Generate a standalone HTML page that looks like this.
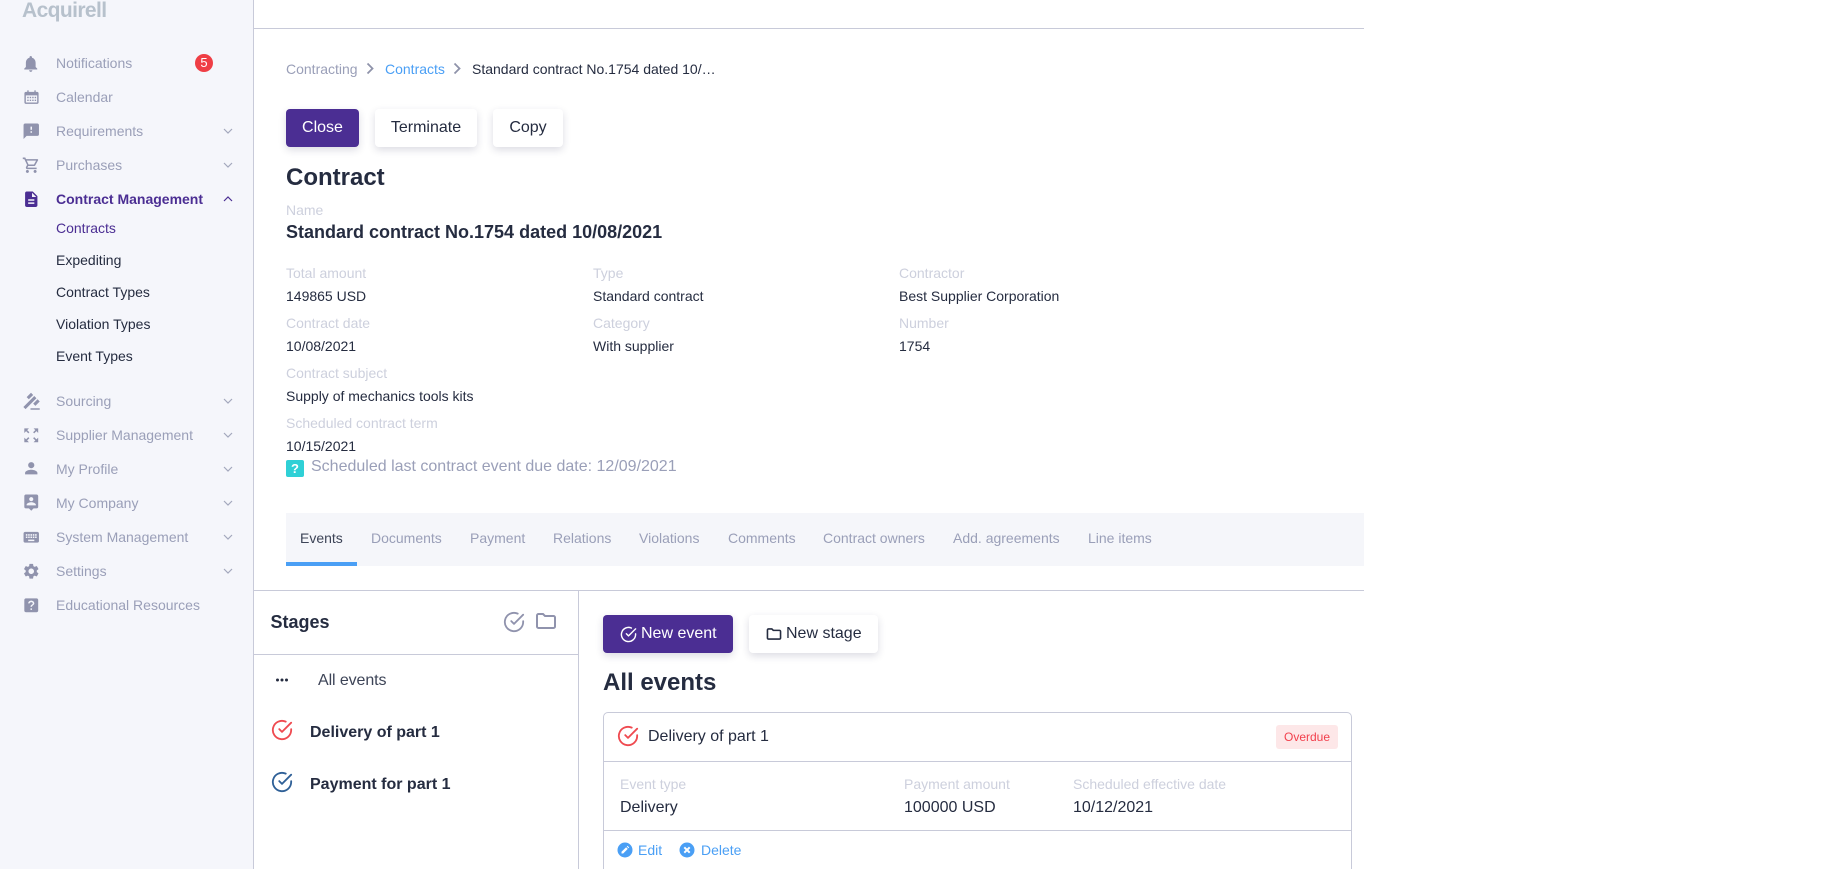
<!DOCTYPE html>
<html lang="en"><head><meta charset="utf-8"><title>Contract</title>
<style>
html,body{margin:0;padding:0;width:1821px;height:869px;overflow:hidden;background:#fff}
body{position:relative;font-family:"Liberation Sans",Arial,sans-serif;font-size:14px;color:#252c40}
.t{position:absolute;line-height:20px;white-space:nowrap}
.abs{position:absolute}
.side{position:absolute;left:0;top:0;width:253px;height:869px;background:#f5f6fb;border-right:1px solid #c8cad9}
.m{color:#9a9fb8}
.l{color:#cdd0dd}
.ic{position:absolute;width:18.5px;height:18.5px;left:21.75px;fill:#9093ad}
.ch{position:absolute;left:222px;width:12px;height:8px;fill:none;stroke:#a3a7bd;stroke-width:1.2}
.btn{position:absolute;height:38px;line-height:37px;border-radius:4px;background:#fff;box-shadow:0 3px 8px rgba(40,40,80,.16);text-align:center;font-size:16px;color:#252c40}
.btn.p{background:#4b2e93;color:#fff}
.hl{position:absolute;height:1px;background:#c8cad9}
.vl{position:absolute;width:1px;background:#c8cad9}
.tab{color:#9a9fb8;top:528px}
</style></head><body>
<div class="side"></div>
<div class="t" style="left:22px;top:-2px;font-size:21px;line-height:26px;font-weight:bold;color:#b7c1cc;letter-spacing:-.6px">Acquirell</div>

<svg class="ic" style="top:54px;width:19.5px;height:19.5px;left:21.25px" viewBox="0 0 24 24"><path d="M12 22c1.1 0 2-.9 2-2h-4c0 1.1.89 2 2 2zm6-6v-5c0-3.07-1.64-5.64-4.500-6.320V4c0-.83-.67-1.500-1.500-1.500s-1.500.67-1.500 1.500v.68C7.630 5.360 6 7.920 6 11v5l-2 2v1h16v-1l-2-2z"/></svg>
<svg class="ic" style="top:89px;width:17px;height:17px;left:22.5px" viewBox="0 0 24 24"><path fill-rule="evenodd" d="M6 2h2v2h8V2h2v2h2c1.100 0 2 .9 2 2v13c0 1.100-.9 2-2 2H4c-1.100 0-2-.9-2-2V6c0-1.100.9-2 2-2h2V2zM4 9v10h16V9H4zm2 2h2v2H6v-2zm3.500 0h2v2h-2v-2zm3.500 0h2v2h-2v-2zm3.500 0h2v2h-2v-2zM6 15h2v2H6v-2zm3.500 0h2v2h-2v-2zm3.500 0h2v2h-2v-2zm3.500 0h2v2h-2v-2z"/></svg>
<svg class="ic" style="top:122px" viewBox="0 0 24 24"><path d="M20 2H4c-1.100 0-1.990.9-1.990 2L2 22l4-4h14c1.100 0 2-.9 2-2V4c0-1.100-.9-2-2-2zm-7 12h-2v-2h2v2zm0-4h-2V6h2v4z"/></svg>
<svg class="ic" style="top:156px" viewBox="0 0 24 24"><path d="M15.550 13c.75 0 1.410-.41 1.750-1.030l3.580-6.490c.37-.66-.11-1.480-.87-1.480H5.210l-.94-2H1v2h2l3.600 7.590-1.350 2.440C4.520 15.370 5.480 17 7 17h12v-2H7l1.100-2h7.450zM6.160 6h12.150l-2.760 5H8.530L6.160 6zM7 18c-1.100 0-1.990.9-1.990 2S5.900 22 7 22s2-.9 2-2-.9-2-2-2zm10 0c-1.100 0-1.990.9-1.990 2s.89 2 1.990 2 2-.9 2-2-.9-2-2-2z"/></svg>
<svg class="ic" style="top:190px;fill:#4b2e93" viewBox="0 0 24 24"><path d="M14 2H6c-1.100 0-1.990.9-1.990 2L4 20c0 1.100.89 2 1.990 2H18c1.100 0 2-.9 2-2V8l-6-6zm2 16H8v-2h8v2zm0-4H8v-2h8v2zm-3-5V3.500L18.500 9H13z"/></svg>
<svg class="ic" style="top:392px;transform:scaleX(-1)" viewBox="0 0 24 24"><path d="M1 21h12v2H1zM5.245 8.070l2.830-2.827 14.140 14.142-2.828 2.828zM12.317 1l5.657 5.656-2.830 2.830-5.654-5.660zM3.825 9.485l5.657 5.657-2.828 2.828-5.657-5.657z"/></svg>
<svg class="ic" style="top:426px" viewBox="0 0 24 24"><path d="M15 3l2.300 2.300-2.890 2.870 1.420 1.420L18.700 6.700 21 9V3zM3 9l2.300-2.300 2.870 2.890 1.420-1.420L6.700 5.300 9 3H3zm6 12l-2.300-2.300 2.890-2.870-1.420-1.420L5.300 17.300 3 15v6zm12-6l-2.300 2.300-2.870-2.890-1.420 1.420 2.890 2.870L15 21h6z"/></svg>
<svg class="ic" style="top:459px" viewBox="0 0 24 24"><path d="M12 12c2.210 0 4-1.790 4-4s-1.790-4-4-4-4 1.790-4 4 1.790 4 4 4zm0 2c-2.670 0-8 1.340-8 4v2h16v-2c0-2.660-5.330-4-8-4z"/></svg>
<svg class="ic" style="top:493px" viewBox="0 0 24 24"><path d="M19 2H5c-1.110 0-2 .9-2 2v14c0 1.100.89 2 2 2h4l3 3 3-3h4c1.100 0 2-.9 2-2V4c0-1.100-.9-2-2-2zm-7 3.300c1.490 0 2.700 1.210 2.700 2.700 0 1.490-1.210 2.700-2.700 2.700-1.490 0-2.700-1.210-2.700-2.700 0-1.490 1.210-2.700 2.700-2.700zM18 16H6v-.9c0-2 4-3.100 6-3.100s6 1.100 6 3.100v.9z"/></svg>
<svg class="ic" style="top:528px" viewBox="0 0 24 24"><path d="M20 5H4c-1.100 0-1.990.9-1.990 2L2 17c0 1.100.9 2 2 2h16c1.100 0 2-.9 2-2V7c0-1.100-.9-2-2-2zm-9 3h2v2h-2V8zm0 3h2v2h-2v-2zM8 8h2v2H8V8zm0 3h2v2H8v-2zm-1 2H5v-2h2v2zm0-3H5V8h2v2zm9 7H8v-2h8v2zm0-4h-2v-2h2v2zm0-3h-2V8h2v2zm3 3h-2v-2h2v2zm0-3h-2V8h2v2z"/></svg>
<svg class="ic" style="top:562px" viewBox="0 0 24 24"><path d="M19.140 12.940c.04-.3.06-.61.06-.94 0-.32-.02-.64-.07-.94l2.030-1.580c.18-.14.23-.41.12-.61l-1.920-3.320c-.12-.22-.37-.29-.59-.22l-2.390.96c-.5-.38-1.030-.7-1.620-.94l-.36-2.540c-.04-.24-.24-.41-.48-.41h-3.840c-.24 0-.43.17-.47.41l-.36 2.540c-.59.24-1.130.57-1.620.94l-2.390-.96c-.22-.08-.47 0-.59.22L2.740 8.870c-.12.21-.08.47.12.61l2.030 1.580c-.05.3-.09.63-.09.94s.02.64.07.94l-2.030 1.580c-.18.14-.23.41-.12.61l1.920 3.320c.12.22.37.29.59.22l2.390-.96c.5.38 1.030.7 1.620.94l.36 2.540c.05.24.24.41.48.41h3.840c.24 0 .44-.17.47-.41l.36-2.540c.59-.24 1.130-.56 1.620-.94l2.390.96c.22.08.47 0 .59-.22l1.920-3.320c.12-.22.07-.47-.12-.61l-2.010-1.580zM12 15.600c-1.980 0-3.600-1.620-3.600-3.600s1.620-3.600 3.600-3.600 3.600 1.620 3.600 3.600-1.620 3.600-3.600 3.600z"/></svg>
<svg class="ic" style="top:596px" viewBox="0 0 24 24"><path fill-rule="evenodd" d="M5 3h14c1.100 0 2 .9 2 2v14c0 1.100-.9 2-2 2H5c-1.100 0-2-.9-2-2V5c0-1.100.9-2 2-2zm6 13v2h2v-2h-2zm1-10c-2.200 0-4 1.600-4 3.600h2c0-.9.9-1.600 2-1.600s2 .7 2 1.600c0 1.800-3 1.600-3 4.400h2c0-2 3-2.200 3-4.400C16 7.600 14.200 6 12 6z"/></svg>

<div class="t m" style="left:56px;top:53px">Notifications</div>
<div class="abs" style="left:195px;top:54px;width:18px;height:18px;border-radius:9px;background:#ef3e45;color:#fff;text-align:center;line-height:18px;font-size:13px">5</div>
<div class="t m" style="left:56px;top:87px">Calendar</div>
<div class="t m" style="left:56px;top:121px">Requirements</div>
<div class="t m" style="left:56px;top:155px">Purchases</div>
<div class="t" style="left:56px;top:189px;font-weight:bold;color:#4b2e93">Contract Management</div>
<div class="t" style="left:56px;top:218px;color:#4b2e93">Contracts</div>
<div class="t" style="left:56px;top:250px">Expediting</div>
<div class="t" style="left:56px;top:282px">Contract Types</div>
<div class="t" style="left:56px;top:314px">Violation Types</div>
<div class="t" style="left:56px;top:346px">Event Types</div>
<div class="t m" style="left:56px;top:391px">Sourcing</div>
<div class="t m" style="left:56px;top:425px">Supplier Management</div>
<div class="t m" style="left:56px;top:459px">My Profile</div>
<div class="t m" style="left:56px;top:493px">My Company</div>
<div class="t m" style="left:56px;top:527px">System Management</div>
<div class="t m" style="left:56px;top:561px">Settings</div>
<div class="t m" style="left:56px;top:595px">Educational Resources</div>

<svg class="ch" style="top:127px" viewBox="0 0 12 8"><path d="M2 2l4 4 4-4"/></svg>
<svg class="ch" style="top:161px" viewBox="0 0 12 8"><path d="M2 2l4 4 4-4"/></svg>
<svg class="ch" style="top:195px;stroke:#4b2e93" viewBox="0 0 12 8"><path d="M2 6l4-4 4 4"/></svg>
<svg class="ch" style="top:397px" viewBox="0 0 12 8"><path d="M2 2l4 4 4-4"/></svg>
<svg class="ch" style="top:431px" viewBox="0 0 12 8"><path d="M2 2l4 4 4-4"/></svg>
<svg class="ch" style="top:465px" viewBox="0 0 12 8"><path d="M2 2l4 4 4-4"/></svg>
<svg class="ch" style="top:499px" viewBox="0 0 12 8"><path d="M2 2l4 4 4-4"/></svg>
<svg class="ch" style="top:533px" viewBox="0 0 12 8"><path d="M2 2l4 4 4-4"/></svg>
<svg class="ch" style="top:567px" viewBox="0 0 12 8"><path d="M2 2l4 4 4-4"/></svg>

<div class="hl" style="left:254px;top:28px;width:1110px"></div>

<div class="t m" style="left:286px;top:59px">Contracting</div>
<svg class="abs" style="left:366px;top:62px" width="8" height="13" viewBox="0 0 8 13"><path d="M1.500 1.500l5 5-5 5" fill="none" stroke="#8f93aa" stroke-width="1.800"/></svg>
<div class="t" style="left:385px;top:59px;color:#4a9ff5">Contracts</div>
<svg class="abs" style="left:453px;top:62px" width="8" height="13" viewBox="0 0 8 13"><path d="M1.500 1.500l5 5-5 5" fill="none" stroke="#8f93aa" stroke-width="1.800"/></svg>
<div class="t" style="left:472px;top:59px">Standard contract No.1754 dated 10/…</div>

<div class="btn p" style="left:286px;top:109px;width:73px">Close</div>
<div class="btn" style="left:375px;top:109px;width:102px">Terminate</div>
<div class="btn" style="left:493px;top:109px;width:70px">Copy</div>

<div class="t" style="left:286px;top:168px;font-size:24px;font-weight:bold;line-height:20px">Contract</div>
<div class="t l" style="left:286px;top:200px">Name</div>
<div class="t" style="left:286px;top:222px;font-size:18px;font-weight:bold">Standard contract No.1754 dated 10/08/2021</div>

<div class="t l" style="left:286px;top:263px">Total amount</div>
<div class="t" style="left:286px;top:286px">149865 USD</div>
<div class="t l" style="left:593px;top:263px">Type</div>
<div class="t" style="left:593px;top:286px">Standard contract</div>
<div class="t l" style="left:899px;top:263px">Contractor</div>
<div class="t" style="left:899px;top:286px">Best Supplier Corporation</div>
<div class="t l" style="left:286px;top:313px">Contract date</div>
<div class="t" style="left:286px;top:336px">10/08/2021</div>
<div class="t l" style="left:593px;top:313px">Category</div>
<div class="t" style="left:593px;top:336px">With supplier</div>
<div class="t l" style="left:899px;top:313px">Number</div>
<div class="t" style="left:899px;top:336px">1754</div>
<div class="t l" style="left:286px;top:363px">Contract subject</div>
<div class="t" style="left:286px;top:386px">Supply of mechanics tools kits</div>
<div class="t l" style="left:286px;top:413px">Scheduled contract term</div>
<div class="t" style="left:286px;top:436px">10/15/2021</div>
<div class="abs" style="left:286px;top:460px;width:18px;height:17px;border-radius:2px;background:#2fd0d6;color:#fff;font-weight:bold;text-align:center;line-height:17px;font-size:13px">?</div>
<div class="t m" style="left:311px;top:457px;font-size:16px">Scheduled last contract event due date: 12/09/2021</div>

<div class="abs" style="left:286px;top:513px;width:1078px;height:53px;background:#f5f6fa"></div>
<div class="abs" style="left:286px;top:562px;width:71px;height:4px;background:#4a9ff5"></div>
<div class="t tab" style="left:300px;color:#3d4457">Events</div>
<div class="t tab" style="left:371px">Documents</div>
<div class="t tab" style="left:470px">Payment</div>
<div class="t tab" style="left:553px">Relations</div>
<div class="t tab" style="left:639px">Violations</div>
<div class="t tab" style="left:728px">Comments</div>
<div class="t tab" style="left:823px">Contract owners</div>
<div class="t tab" style="left:953px">Add. agreements</div>
<div class="t tab" style="left:1088px">Line items</div>

<div class="hl" style="left:254px;top:590px;width:1110px"></div>
<div class="vl" style="left:578px;top:590px;height:279px"></div>
<div class="hl" style="left:254px;top:654px;width:324px"></div>

<div class="t" style="left:270.5px;top:612px;font-size:18px;font-weight:bold">Stages</div>
<svg class="abs" style="left:503px;top:611px" width="22" height="22" viewBox="0 0 24 24" fill="none" stroke="#9093ad" stroke-width="2" stroke-linecap="round" stroke-linejoin="round"><path d="M22 11.080V12a10 10 0 1 1-5.930-9.140"/><path d="M22 4L12 14.010l-3-3"/></svg>
<svg class="abs" style="left:536px;top:613px" width="20" height="16" viewBox="1 1 20 16" fill="none" stroke="#9093ad" stroke-width="2"><path d="M2 3.500c0-.8.700-1.500 1.500-1.500H8l2 2h8.500c.8 0 1.500.7 1.500 1.500v9c0 .8-.7 1.500-1.500 1.500h-15C2.700 16 2 15.300 2 14.500z"/></svg>

<svg class="abs" style="left:275px;top:678px" width="14" height="4" viewBox="0 0 14 4" fill="#252c40"><circle cx="2.500" cy="2" r="1.500"/><circle cx="7" cy="2" r="1.500"/><circle cx="11.500" cy="2" r="1.500"/></svg>
<div class="t" style="left:318px;top:671px;font-size:16px;letter-spacing:-.1px;color:#3d4457">All events</div>
<svg class="abs" style="left:271px;top:719px" width="22" height="22" viewBox="0 0 24 24" fill="none" stroke="#ef4a50" stroke-width="2" stroke-linecap="round" stroke-linejoin="round"><path d="M22 11.080V12a10 10 0 1 1-5.930-9.140"/><path d="M22 4L12 14.010l-3-3"/></svg>
<div class="t" style="left:310px;top:723px;font-size:16px;font-weight:bold">Delivery of part 1</div>
<svg class="abs" style="left:271px;top:771px" width="22" height="22" viewBox="0 0 24 24" fill="none" stroke="#2f6097" stroke-width="2" stroke-linecap="round" stroke-linejoin="round"><path d="M22 11.080V12a10 10 0 1 1-5.930-9.140"/><path d="M22 4L12 14.010l-3-3"/></svg>
<div class="t" style="left:310px;top:775px;font-size:16px;font-weight:bold">Payment for part 1</div>

<div class="btn p" style="left:603px;top:615px;width:130px"><svg style="position:absolute;left:17px;top:11px" width="17" height="17" viewBox="0 0 24 24" fill="none" stroke="#fff" stroke-width="2" stroke-linecap="round" stroke-linejoin="round"><path d="M22 11.080V12a10 10 0 1 1-5.930-9.140"/><path d="M22 4L12 14.010l-3-3"/></svg><span style="position:absolute;left:38px;white-space:nowrap">New event</span></div>
<div class="btn" style="left:749px;top:615px;width:129px"><svg style="position:absolute;left:17px;top:12px" width="16" height="14" viewBox="0 0 22 18" fill="none" stroke="#252c40" stroke-width="2.200"><path d="M2 3.500c0-.8.700-1.500 1.500-1.500H8l2 2h8.500c.8 0 1.500.7 1.500 1.500v9c0 .8-.7 1.500-1.500 1.500h-15C2.700 16 2 15.300 2 14.500z"/></svg><span style="position:absolute;left:37px;white-space:nowrap">New stage</span></div>
<div class="t" style="left:603px;top:673px;font-size:24px;font-weight:bold">All events</div>

<div class="abs" style="left:603px;top:712px;width:747px;height:170px;border:1px solid #c8cad9;border-radius:5px;box-sizing:content-box"></div>
<div class="hl" style="left:604px;top:761px;width:747px"></div>
<div class="hl" style="left:604px;top:830px;width:747px"></div>
<svg class="abs" style="left:617px;top:725px" width="22" height="22" viewBox="0 0 24 24" fill="none" stroke="#ef4a50" stroke-width="2" stroke-linecap="round" stroke-linejoin="round"><path d="M22 11.080V12a10 10 0 1 1-5.930-9.140"/><path d="M22 4L12 14.010l-3-3"/></svg>
<div class="t" style="left:648px;top:727px;font-size:16px">Delivery of part 1</div>
<div class="abs" style="left:1276px;top:725px;width:62px;height:24px;border-radius:3px;background:#fde7e8;color:#f23f4c;font-size:12px;line-height:24px;text-align:center">Overdue</div>

<div class="t l" style="left:620px;top:774px">Event type</div>
<div class="t" style="left:620px;top:798px;font-size:16px">Delivery</div>
<div class="t l" style="left:904px;top:774px">Payment amount</div>
<div class="t" style="left:904px;top:798px;font-size:16px">100000 USD</div>
<div class="t l" style="left:1073px;top:774px">Scheduled effective date</div>
<div class="t" style="left:1073px;top:798px;font-size:16px">10/12/2021</div>

<svg class="abs" style="left:617px;top:842px" width="16" height="16" viewBox="0 0 16 16"><circle cx="8" cy="8" r="7.500" fill="#4a9ff5"/><path d="M4.500 11.500v-1.700l4.600-4.600 1.700 1.700-4.600 4.600zM9.800 4.500l.7-.7 1.700 1.700-.7.700z" fill="#fff"/></svg>
<div class="t" style="left:638px;top:840px;color:#4a9ff5">Edit</div>
<svg class="abs" style="left:679px;top:842px" width="16" height="16" viewBox="0 0 16 16"><circle cx="8" cy="8" r="7.500" fill="#4a9ff5"/><path d="M5.300 5.300l5.400 5.400M10.700 5.300l-5.400 5.400" stroke="#fff" stroke-width="2"/></svg>
<div class="t" style="left:701px;top:840px;color:#4a9ff5">Delete</div>
</body></html>
